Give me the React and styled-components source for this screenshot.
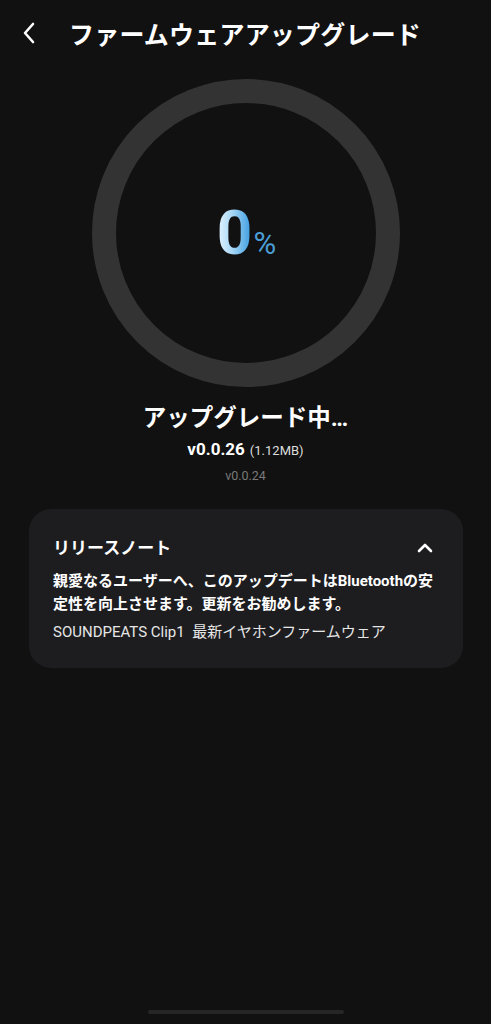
import React from 'react';
import styled, { createGlobalStyle } from 'styled-components';

const Global = createGlobalStyle`
  html, body {
    margin: 0;
    padding: 0;
    background: #111111;
  }
  body {
    font-family: Roboto, "Noto Sans CJK JP", sans-serif;
    color: #ffffff;
  }
`;

const Screen = styled.div`
  width: 491px;
  height: 1024px;
  background: #111111;
  display: flex;
  flex-direction: column;
  overflow: hidden;
`;

const Header = styled.div`
  height: 66px;
  display: flex;
  align-items: center;
  padding-left: 18px;
  gap: 29px;
`;

const BackBtn = styled.div`
  width: 22px;
  height: 24px;
  display: flex;
  align-items: center;
  justify-content: center;
`;

const Title = styled.h1`
  margin: 0;
  font-size: 25px;
  font-weight: 700;
  letter-spacing: 0.2px;
  color: #ffffff;
`;

const RingWrap = styled.div`
  display: flex;
  justify-content: center;
  margin-top: 13px;
`;

const Ring = styled.div`
  width: 308px;
  height: 308px;
  border-radius: 50%;
  box-sizing: border-box;
  border: 24px solid #333333;
  display: flex;
  align-items: center;
  justify-content: center;
`;

const Percent = styled.div`
  display: flex;
  align-items: baseline;
  margin-left: 2px;
`;

const Digit = styled.span`
  font-family: Roboto, sans-serif;
  font-size: 62px;
  font-weight: 700;
  line-height: 1;
  letter-spacing: -1px;
  background: linear-gradient(90deg, #e6f5ff 0%, #a6d6f5 45%, #3d9de0 100%);
  -webkit-background-clip: text;
  background-clip: text;
  color: transparent;
`;

const Sign = styled.span`
  font-family: Roboto, sans-serif;
  font-size: 31px;
  color: #4b9fd6;
  margin-left: 2px;
`;

const Status = styled.div`
  display: flex;
  flex-direction: column;
  align-items: center;
  margin-top: 15px;
`;

const StatusTitle = styled.div`
  font-size: 23.5px;
  font-weight: 700;
  line-height: 32px;
`;

const Version = styled.div`
  margin-top: 4px;
  font-size: 17px;
  font-weight: 700;
  line-height: 22px;
  display: flex;
  align-items: baseline;
  gap: 5px;
`;

const Size = styled.span`
  font-size: 13px;
  font-weight: 400;
  color: #dddddd;
`;

const OldVersion = styled.div`
  margin-top: 5px;
  font-size: 12.5px;
  color: #7a7a7a;
  line-height: 18px;
`;

const Card = styled.div`
  margin: 24px 28px 0 29px;
  background: #1d1d20;
  border-radius: 22px;
  padding: 27px 26px 25px 24px;
`;

const CardHead = styled.div`
  display: flex;
  align-items: center;
  justify-content: space-between;
`;

const CardTitle = styled.div`
  font-size: 17px;
  font-weight: 700;
  line-height: 24px;
`;

const Toggle = styled.div`
  display: flex;
  margin-right: 4px;
`;

const Body = styled.p`
  margin: 10px 0 0;
  font-size: 15px;
  font-weight: 700;
  line-height: 23px;
  color: #ffffff;
`;

const Note = styled.p`
  margin: 5px 0 0;
  font-size: 15px;
  font-weight: 400;
  line-height: 22px;
  color: #e6e6e6;
`;

const Spacer = styled.div`
  flex: 1;
`;

const HomeBar = styled.div`
  align-self: center;
  width: 196px;
  height: 4px;
  border-radius: 2px;
  background: #262626;
  margin-bottom: 10px;
`;

export default function App() {
  return (
    <Screen>
      <Global />
      <Header>
        <BackBtn>
          <svg width="14" height="22" viewBox="0 0 14 22" fill="none">
            <path d="M11 2 L3 11 L11 20" stroke="#fff" strokeWidth="2.6" strokeLinecap="round" strokeLinejoin="round" />
          </svg>
        </BackBtn>
        <Title>ファームウェアアップグレード</Title>
      </Header>
      <RingWrap>
        <Ring>
          <Percent>
            <Digit>0</Digit>
            <Sign>%</Sign>
          </Percent>
        </Ring>
      </RingWrap>
      <Status>
        <StatusTitle>アップグレード中…</StatusTitle>
        <Version>
          v0.0.26 <Size>(1.12MB)</Size>
        </Version>
        <OldVersion>v0.0.24</OldVersion>
      </Status>
      <Card>
        <CardHead>
          <CardTitle>リリースノート</CardTitle>
          <Toggle>
            <svg width="16" height="10" viewBox="0 0 16 10" fill="none">
              <path d="M2 8 L8 2 L14 8" stroke="#fff" strokeWidth="2.6" strokeLinecap="round" strokeLinejoin="round" />
            </svg>
          </Toggle>
        </CardHead>
        <Body>
          親愛なるユーザーへ、このアップデートはBluetoothの安定性を向上させます。更新をお勧めします。
        </Body>
        <Note>SOUNDPEATS Clip1&nbsp;&nbsp;最新イヤホンファームウェア</Note>
      </Card>
      <Spacer />
      <HomeBar />
    </Screen>
  );
}
